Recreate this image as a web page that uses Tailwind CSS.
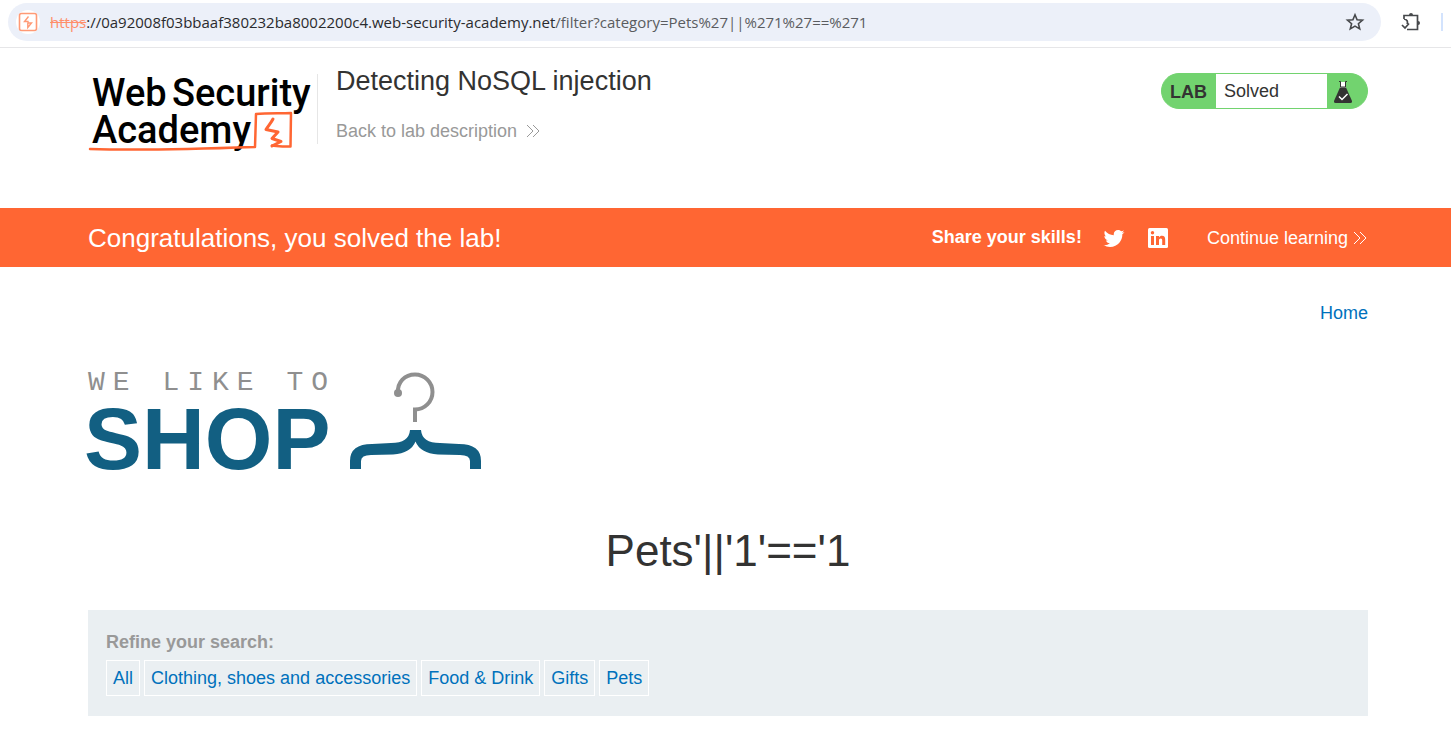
<!DOCTYPE html>
<html lang="en">
<head>
  <meta charset="UTF-8">
  <meta name="viewport" content="width=device-width, initial-scale=1.0">
  <title>Detecting NoSQL injection</title>
  <script src="https://cdn.jsdelivr.net/npm/@tailwindcss/browser@4"></script>
</head>
<body class="bg-white min-h-screen text-[#333332] text-lg leading-6 font-['Liberation_Sans',Arial,sans-serif]">

  <!-- Address bar -->
  <div class="flex items-center h-12 pl-2 pt-[2px] pb-[6px] border-b border-[#e6e6e8]">
    <div class="flex flex-1 items-center h-[38px] pl-2 pr-4 rounded-full bg-[#ecf0f9]">
      <span class="flex items-center justify-center size-6 rounded-full bg-white">
        <svg class="size-5" viewBox="0 0 20 20" fill="none" stroke="#ff9a76" aria-hidden="true">
          <rect x="1.500" y="1.500" width="17" height="17" rx="2" stroke-width="1.600"/>
          <path d="M10.500 4.500L6.500 9.500H10V11H13.500L9.800 15.500V11" stroke-width="1.400"/>
        </svg>
      </span>
      <div class="flex-1 pl-[10px] text-[15px] leading-5 whitespace-nowrap text-[#5a5c60] font-['Open_Sans',sans-serif]"><span class="line-through text-[#ff8f6b]">https</span><span class="text-[#2a2b2e]">://0a92008f03bbaaf380232ba8002200c4.web-security-academy.net</span>/filter?category=Pets%27||%271%27==%271</div>
      <button aria-label="Bookmark this page">
        <svg class="size-5" viewBox="0 0 20 20" fill="none" stroke="#46484b" stroke-width="1.600" aria-hidden="true">
          <path d="M10 2.800l2.100 5 5.400.4-4.100 3.500 1.300 5.200-4.700-2.800-4.700 2.800 1.300-5.200-4.100-3.500 5.400-.4z"/>
        </svg>
      </button>
    </div>
    <button class="ml-5" aria-label="Extensions">
      <svg class="size-5" viewBox="0 0 20 20" fill="none" stroke="#46484b" stroke-width="1.700" aria-hidden="true">
        <path d="M3 7V3.500h13.500v14H6M3 7c3 .3 4.300 2.700 3 5M1 13l3 3 4-4.500"/>
        <path d="M8 3a2 2 0 0 1 4 0zM17 9a2 2 0 0 1 0 4z" fill="#46484b" stroke="none"/>
      </svg>
    </button>
    <span class="w-[2px] h-[18px] ml-5 mr-2 bg-[#d3e3fd]"></span>
  </div>

  <!-- Lab header -->
  <header class="flex items-start ml-[88px] mr-[83px] pt-6 pb-14">
    <a href="#" aria-label="Web Security Academy" class="shrink-0">
      <svg class="w-[230px] h-20 overflow-visible" viewBox="0 0 230 80" aria-hidden="true">
        <g font-family="Roboto, sans-serif" font-weight="500" font-size="38" fill="#000">
          <text x="4" y="34">Web</text>
          <text x="84" y="34">Security</text>
          <text x="4" y="71">Academy</text>
        </g>
        <g fill="none" stroke="#ff6633" stroke-linejoin="round" stroke-linecap="round">
          <path d="M2 77C50 78.500 110 77 167 75L168 42C180 41 192 41.500 203 41L202.500 74.500C196 75 190 74 184 73.500" stroke-width="2.500"/>
          <path d="M185 47C183 51 180 54 178 57.500L190 60 184 66.500 193 69.500 184 74" stroke-width="3"/>
        </g>
        <path d="M229.500 2v70" stroke="#e6e6e6"/>
      </svg>
    </a>
    <div class="ml-[18px] -mt-2">
      <h2 class="text-[27px] leading-[34px]">Detecting NoSQL injection</h2>
      <a href="#" class="flex items-center mt-[21px] text-[#999]">Back to lab description
        <svg class="w-4 h-4 ml-2" viewBox="0 0 16 16" fill="none" stroke="currentColor" aria-hidden="true"><path d="M2 2l6 6-6 6M8 2l6 6-6 6"/></svg>
      </a>
    </div>
    <div class="flex ml-auto w-[207px] h-9 mt-px rounded-full border border-[#72d36f] bg-[#72d36f] overflow-hidden">
      <span class="w-[54px] pl-2 leading-9 font-bold">LAB</span>
      <span class="flex-1 pl-2 leading-[34px] bg-white">Solved</span>
      <span class="w-10 pl-1 pt-[6px]">
        <svg class="w-6 h-6" viewBox="0 0 24 24" aria-hidden="true">
          <path d="M9 2h6v6H9z" fill="#fff"/>
          <path d="M8 1.500h1.500V7h5V1.500H16" fill="none" stroke="#333332"/>
          <path d="M9 7.500h6L21 21q.5 2-1.500 2h-15q-2 0-1.500-2z" fill="#333332"/>
          <path d="M8 16.500l3 3 5.500-5.500" fill="none" stroke="#fff" stroke-width="1.500"/>
        </svg>
      </span>
    </div>
  </header>

  <!-- Solved banner -->
  <section class="flex items-center h-[59px] pl-[88px] pr-[83px] bg-[#ff6633] text-white">
    <h4 class="text-[26px] leading-8">Congratulations, you solved the lab!</h4>
    <span class="ml-auto pb-[2px] font-bold">Share your skills!</span>
    <a href="#" class="ml-5" aria-label="Share on Twitter">
      <svg class="size-6" viewBox="0 0 24 24" fill="#fff" aria-hidden="true"><path d="M22.460 6c-.77.35-1.600.58-2.460.69.88-.53 1.560-1.370 1.880-2.380-.83.5-1.750.85-2.720 1.050C18.370 4.500 17.260 4 16 4c-2.350 0-4.270 1.920-4.270 4.290 0 .34.04.67.11.98C8.280 9.090 5.110 7.380 3 4.790c-.37.63-.58 1.370-.58 2.150 0 1.490.75 2.810 1.910 3.560-.71 0-1.370-.2-1.950-.5v.03c0 2.080 1.480 3.820 3.440 4.210a4.220 4.220 0 0 1-1.930.07 4.280 4.280 0 0 0 4 2.980 8.521 8.521 0 0 1-5.330 1.840c-.34 0-.68-.02-1.020-.06C3.440 20.290 5.700 21 8.120 21 16 21 20.330 14.460 20.330 8.790c0-.19 0-.37-.01-.56.84-.6 1.560-1.360 2.140-2.230z"/></svg>
    </a>
    <a href="#" class="ml-5" aria-label="Share on LinkedIn">
      <svg class="size-6" viewBox="0 0 24 24" aria-hidden="true">
        <rect x="2" y="2" width="20" height="20" rx="1.500" fill="#fff"/>
        <path d="M5 10h3v9H5zM10 10h3v1.500c.6-1.100 1.600-1.700 3-1.700 2.400 0 3.200 1.500 3.200 4V19h-3v-4.500c0-1.300-.3-2.100-1.500-2.100s-1.700.9-1.700 2.200V19h-3z" fill="#ff6633"/>
        <circle cx="6.500" cy="6.800" r="1.700" fill="#ff6633"/>
      </svg>
    </a>
    <a href="#" class="flex items-center ml-[37px]">Continue learning
      <svg class="w-4 h-4 ml-1" viewBox="0 0 16 16" fill="none" stroke="currentColor" aria-hidden="true"><path d="M2 2l6 6-6 6M8 2l6 6-6 6"/></svg>
    </a>
  </section>

  <main class="ml-[88px] mr-[83px]">
    <nav class="flex justify-end pt-[34px]">
      <a href="#" class="text-[#0071bc]">Home</a>
    </nav>

    <!-- Shop logo -->
    <svg class="w-[400px] h-[104px] mt-11 overflow-visible" viewBox="0 0 400 104" role="img" aria-label="We like to shop">
      <text x="0" y="21" font-family="Liberation Mono, monospace" font-size="28" fill="#8f8f8f" class="tracking-[8px]">WE LIKE TO</text>
      <text x="-4" y="100" font-family="Liberation Sans, Arial, sans-serif" font-weight="700" font-size="87" fill="#125f82">SHOP</text>
      <path d="M310 24C309 13 317 5.500 327 5.500A17.500 17.500 0 0 1 327 40.500V53" fill="none" stroke="#8f8f8f" stroke-width="4"/>
      <circle cx="310" cy="24" r="4" fill="#8f8f8f"/>
      <path d="M262 100V92Q262 75 284 75L303 74Q321 74 322 61H333Q334 74 352 74L371 75Q393 75 393 92V100H382V92Q382 86 372 86L350 85.500Q332 84 327.500 72.500Q323 84 305 85.500L283 86Q273 86 273 92V100Z" fill="#125f82"/>
    </svg>

    <h1 class="mt-12 text-center text-[44px] leading-[60px]">Pets'||'1'=='1</h1>

    <!-- Category filter -->
    <section class="mt-[29px] px-[18px] pt-5 pb-5 bg-[#eaeff2]">
      <p class="font-bold text-[#999]">Refine your search:</p>
      <div class="flex flex-wrap gap-1 mt-[6px] text-[#0071bc]">
        <a href="#" class="px-[6px] py-[5px] border border-white">All</a>
        <a href="#" class="px-[6px] py-[5px] border border-white">Clothing, shoes and accessories</a>
        <a href="#" class="px-[6px] py-[5px] border border-white">Food &amp; Drink</a>
        <a href="#" class="px-[6px] py-[5px] border border-white">Gifts</a>
        <a href="#" class="px-[6px] py-[5px] border border-white">Pets</a>
      </div>
    </section>
  </main>
</body>
</html>
